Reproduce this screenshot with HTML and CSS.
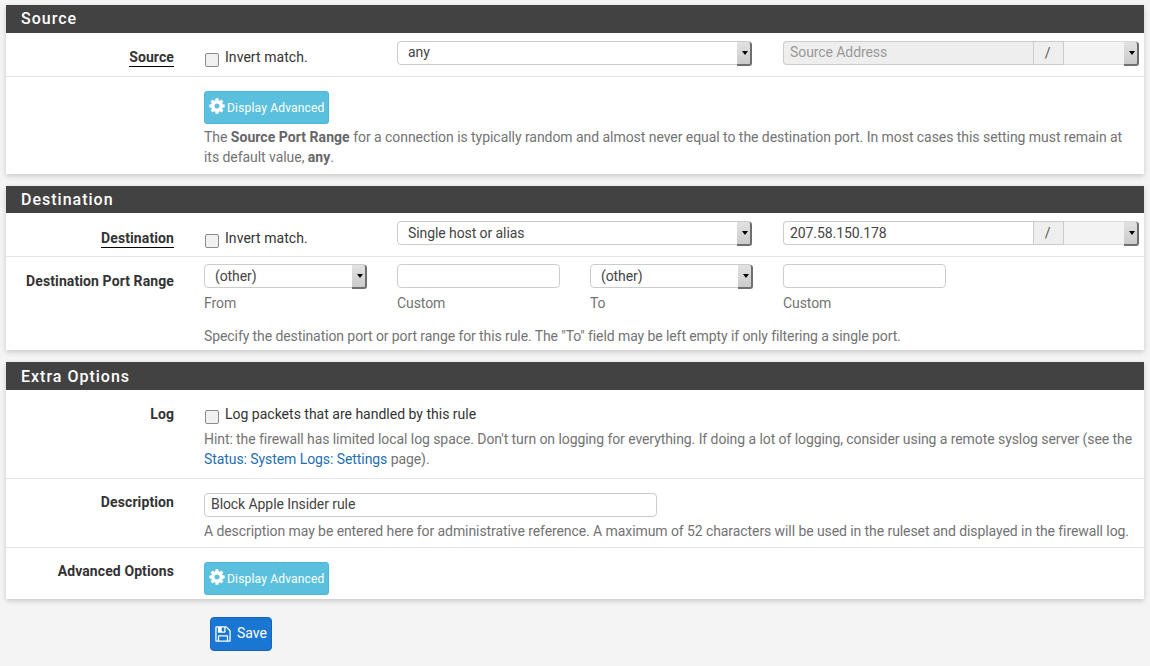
FILE: index.html
```html
<!DOCTYPE html>
<html lang="en">
<head>
<meta charset="utf-8">
<title>Firewall rule</title>
<link rel="stylesheet" href="styles.css">
</head>
<body>
<svg class="defs" width="0" height="0" aria-hidden="true">
  <symbol id="cog" viewBox="0 0 1792 1792"><path d="M1152 896q0-106-75-181t-181-75-181 75-75 181 75 181 181 75 181-75 75-181zm512-109v222q0 12-8 23t-20 13l-185 28q-19 54-39 91 35 50 107 138 10 12 10 25t-9 23q-27 37-99 108t-94 71q-12 0-26-9l-138-108q-44 23-91 38-16 136-29 186-7 28-36 28h-222q-14 0-24.500-8.500t-11.500-21.500l-28-184q-49-16-90-37l-141 107q-10 9-25 9-14 0-25-11-126-114-165-168-7-10-7-23 0-12 8-23 15-21 51-66.500t54-70.500q-27-50-41-99l-183-27q-13-2-21-12.500t-8-23.500v-222q0-12 8-23t19-13l186-28q14-46 39-92-40-57-107-138-10-12-10-24 0-10 9-23 26-36 98.500-107.500t94.500-71.500q13 0 26 10l138 107q44-23 91-38 16-136 29-186 7-28 36-28h222q14 0 24.500 8.500t11.500 21.500l28 184q49 16 90 37l142-107q9-9 24-9 13 0 25 10 129 119 165 170 7 8 7 22 0 12-8 23-15 21-51 66.500t-54 70.500q26 50 41 98l183 28q13 2 21 12.500t8 23.500z"/></symbol>
  <symbol id="save" viewBox="0 0 1792 1792"><path d="M512 1536h768v-384h-768v384zm896 0h128v-896q0-14-10-38.500t-20-34.500l-281-281q-10-10-34-20t-39-10v416q0 40-28 68t-68 28h-576q-40 0-68-28t-28-68v-416h-128v1280h128v-416q0-40 28-68t68-28h832q40 0 68 28t28 68v416zm-384-928v-320q0-13-9.500-22.500t-22.500-9.500h-192q-13 0-22.500 9.500t-9.500 22.500v320q0 13 9.500 22.500t22.500 9.500h192q13 0 22.500-9.500t9.500-22.500zm640 32v928q0 40-28 68t-68 28h-1344q-40 0-68-28t-28-68v-1344q0-40 28-68t68-28h928q40 0 88 20t76 48l280 280q28 28 48 76t20 88z"/></symbol>
</svg>

<section class="panel panel-source">
  <h2 class="panel-title">Source</h2>
  <div class="row row-first">
    <div class="label"><span class="under">Source</span></div>
    <label class="check"><input type="checkbox"> Invert match.</label>
    <div class="span2"><span class="select"><select><option>any</option></select></span></div>
    <div class="group is-disabled">
      <input class="group-input" type="text" placeholder="Source Address" disabled>
      <span class="addon">/</span>
      <span class="select group-select"><select disabled><option></option></select></span>
    </div>
  </div>
  <div class="row row-adv">
    <div class="label"></div>
    <div class="wide">
      <button class="btn-info" type="button"><svg class="cog"><use href="#cog"/></svg>Display Advanced</button>
      <p class="help help-source">The <b>Source Port Range</b> for a connection is typically random and almost never equal to the destination port. In most cases this setting must remain at its default value, <b>any</b>.</p>
    </div>
  </div>
</section>

<section class="panel panel-dest">
  <h2 class="panel-title">Destination</h2>
  <div class="row row-first">
    <div class="label"><span class="under">Destination</span></div>
    <label class="check"><input type="checkbox"> Invert match.</label>
    <div class="span2"><span class="select"><select><option>Single host or alias</option></select></span></div>
    <div class="group">
      <input class="group-input" type="text" value="207.58.150.178">
      <span class="addon">/</span>
      <span class="select group-select"><select disabled><option></option></select></span>
    </div>
  </div>
  <div class="row row-ports">
    <div class="label">Destination Port Range</div>
    <div class="field"><span class="select"><select><option>(other)</option></select></span><span class="sub">From</span></div>
    <div class="field"><input class="text" type="text"><span class="sub">Custom</span></div>
    <div class="field"><span class="select"><select><option>(other)</option></select></span><span class="sub">To</span></div>
    <div class="field"><input class="text" type="text"><span class="sub">Custom</span></div>
    <p class="help help-ports">Specify the destination port or port range for this rule. The "To" field may be left empty if only filtering a single port.</p>
  </div>
</section>

<section class="panel panel-extra">
  <h2 class="panel-title">Extra Options</h2>
  <div class="row row-log">
    <div class="label">Log</div>
    <div class="wide">
      <label class="check"><input type="checkbox"> Log packets that are handled by this rule</label>
      <p class="help help-log">Hint: the firewall has limited local log space. Don't turn on logging for everything. If doing a lot of logging, consider using a remote syslog server (see the <a href="#">Status: System Logs: Settings</a> page).</p>
    </div>
  </div>
  <div class="row row-desc">
    <div class="label">Description</div>
    <div class="wide">
      <input class="text text-desc" type="text" value="Block Apple Insider rule">
      <p class="help help-desc">A description may be entered here for administrative reference. A maximum of 52 characters will be used in the ruleset and displayed in the firewall log.</p>
    </div>
  </div>
  <div class="row row-advopt">
    <div class="label">Advanced Options</div>
    <div class="wide">
      <button class="btn-info" type="button"><svg class="cog"><use href="#cog"/></svg>Display Advanced</button>
    </div>
  </div>
</section>

<div class="actions">
  <button class="btn-save" type="button"><svg class="save"><use href="#save"/></svg>Save</button>
</div>
</body>
</html>
```

FILE: styles.css
```css
* { box-sizing: border-box; }
html, body { height: 100%; }
body {
  margin: 0;
  padding: 5px 6px 0;
  background: #f4f4f4;
  color: #333;
  font: 14px/20px Roboto, "Liberation Sans", sans-serif;
  letter-spacing: -.08px;
  overflow: hidden;
}
.defs { position: absolute; }
.panel {
  background: #fff;
  margin-bottom: 12px;
  box-shadow: 0 2px 5px rgba(0, 0, 0, .18);
}
.panel-title {
  margin: 0;
  height: 28px;
  padding: 4px 15px;
  background: #424242;
  color: #fff;
  font-size: 16px;
  line-height: 20px;
  font-weight: 500;
  letter-spacing: 1px;
}
.panel-dest .panel-title { height: 27px; }
.panel-extra .panel-title { padding-top: 5px; }
.row {
  display: grid;
  grid-template-columns: 198px 193px 193px 193px 1fr;
  padding-right: 5px;
  border-top: 1px solid #e3e3e3;
}
.row-first { border-top: 0; height: 43px; padding-top: 8px; }
.row-adv { height: 98px; padding-top: 14px; }
.row-ports { height: 94px; padding-top: 7px; }
.row-log { border-top: 0; height: 88px; padding-top: 14px; }
.row-desc { height: 69px; padding-top: 14px; }
.row-advopt { height: 52px; padding-top: 14px; }

.label {
  padding-right: 30px;
  text-align: right;
  font-weight: 700;
  letter-spacing: .1px;
  white-space: nowrap;
}
.row-first .label { padding-top: 6px; }
.panel-dest .row-first .label { padding-top: 7px; }
.row-ports .label { padding-top: 7px; }
.row-desc .label, .row-advopt .label { margin-top: -1px; }
.under { border-bottom: 1px solid #000; padding-bottom: 1px; }
.wide { grid-column: 2 / -1; }
.span2 { grid-column: span 2; padding-right: 31px; }
.field { display: flex; flex-direction: column; align-items: flex-start; }

.check { display: flex; align-items: center; gap: 6px; height: 20px; color: #333; margin-top: 6px; letter-spacing: .05px; }
.panel-dest .check { margin-top: 7px; }
.row-log .check { margin-top: 0; letter-spacing: 0; }
.check input {
  appearance: none;
  flex: none;
  width: 14px;
  height: 14px;
  margin: 5px 0 0 1px;
  background: #f1f1f1;
  border: 1px solid #8c8c8c;
  border-radius: 2px;
}

.select { position: relative; display: block; width: 100%; height: 24px; }
.field .select { width: 163px; }
.select select {
  appearance: none;
  display: block;
  width: 100%;
  height: 24px;
  padding: 0 20px 0 10px;
  background: #fff;
  border: 1px solid #ccc;
  border-radius: 4px;
  color: #444;
  font: inherit;
  letter-spacing: inherit;
}
.panel-source .select select { padding-bottom: 2px; }
.select::after {
  content: "";
  position: absolute;
  top: 1px;
  right: 0;
  width: 13px;
  height: 22px;
  border-right: 2px solid #6f6f6f;
  border-bottom: 2px solid #6f6f6f;
  border-radius: 0 3px 3px 0;
  background: linear-gradient(#e2e2e2, #cbcbcb);
}
.select::before {
  content: "";
  position: absolute;
  z-index: 1;
  top: 10px;
  right: 4px;
  border: 3.500px solid transparent;
  border-top: 4px solid #000;
  border-bottom: 0;
}

.group { display: flex; height: 24px; }
.group-input {
  flex: 1;
  min-width: 0;
  height: 24px;
  padding: 0 6px;
  border: 1px solid #ccc;
  border-right: 0;
  border-radius: 4px 0 0 4px;
  background: #fff;
  color: #444;
  font: inherit;
  letter-spacing: inherit;
}
.panel-source .group-input { padding-bottom: 2px; }
.group-input:disabled { background: #eee; }
.group-input::placeholder { color: #999; opacity: 1; }
.addon {
  flex: none;
  width: 31px;
  height: 24px;
  border: 1px solid #ccc;
  background: #eee;
  color: #555;
  text-align: center;
  line-height: 22px;
  padding-right: 2px;
}
.group-select { flex: none; width: 75px; }
.group-select select {
  background: #eee;
  border-left: 0;
  border-radius: 0 4px 4px 0;
}

.text {
  height: 24px;
  padding: 0 6px;
  width: 163px;
  background: #fff;
  border: 1px solid #ccc;
  border-radius: 4px;
  color: #444;
  font: inherit;
  letter-spacing: inherit;
}
.text-desc { display: block; width: 453px; padding-bottom: 2px; }

.sub { display: block; margin-top: 5px; color: #737373; }
.help { margin: 0; color: #737373; }
.help b { font-weight: 700; color: #666; letter-spacing: .05px; }
.help a { color: #1e6fb0; text-decoration: none; }
.help-source { margin-top: 3px; max-width: 925px; letter-spacing: -.05px; }
.help-ports { grid-column: 2 / -1; margin-top: 8px; letter-spacing: -.09px; }
.help-log { margin-top: 5px; max-width: 935px; letter-spacing: -.075px; }
.help-desc { margin-top: 4px; }

.btn-info {
  display: flex;
  align-items: center;
  width: 125px;
  height: 33px;
  padding: 0 0 0 3px;
  background: #5bc0de;
  border: 1px solid #46b8da;
  border-radius: 3px;
  color: #fff;
  font: 12px/18px Roboto, "Liberation Sans", sans-serif;
  letter-spacing: .18px;
  white-space: nowrap;
}
.cog { flex: none; width: 18px; height: 18px; fill: #fff; margin-right: 1px; margin-top: -3px; }

.actions { padding: 6px 0 0 204px; }
.btn-save {
  display: flex;
  align-items: center;
  width: 62px;
  height: 34px;
  padding: 0 0 2px 3px;
  background: #1976d2;
  border: 1px solid #1565c0;
  border-radius: 4px;
  color: #fff;
  font: 14px/20px Roboto, "Liberation Sans", sans-serif;
}
.save { flex: none; width: 18px; height: 18px; fill: #fff; margin: 2px 5px 0 0; }
```
